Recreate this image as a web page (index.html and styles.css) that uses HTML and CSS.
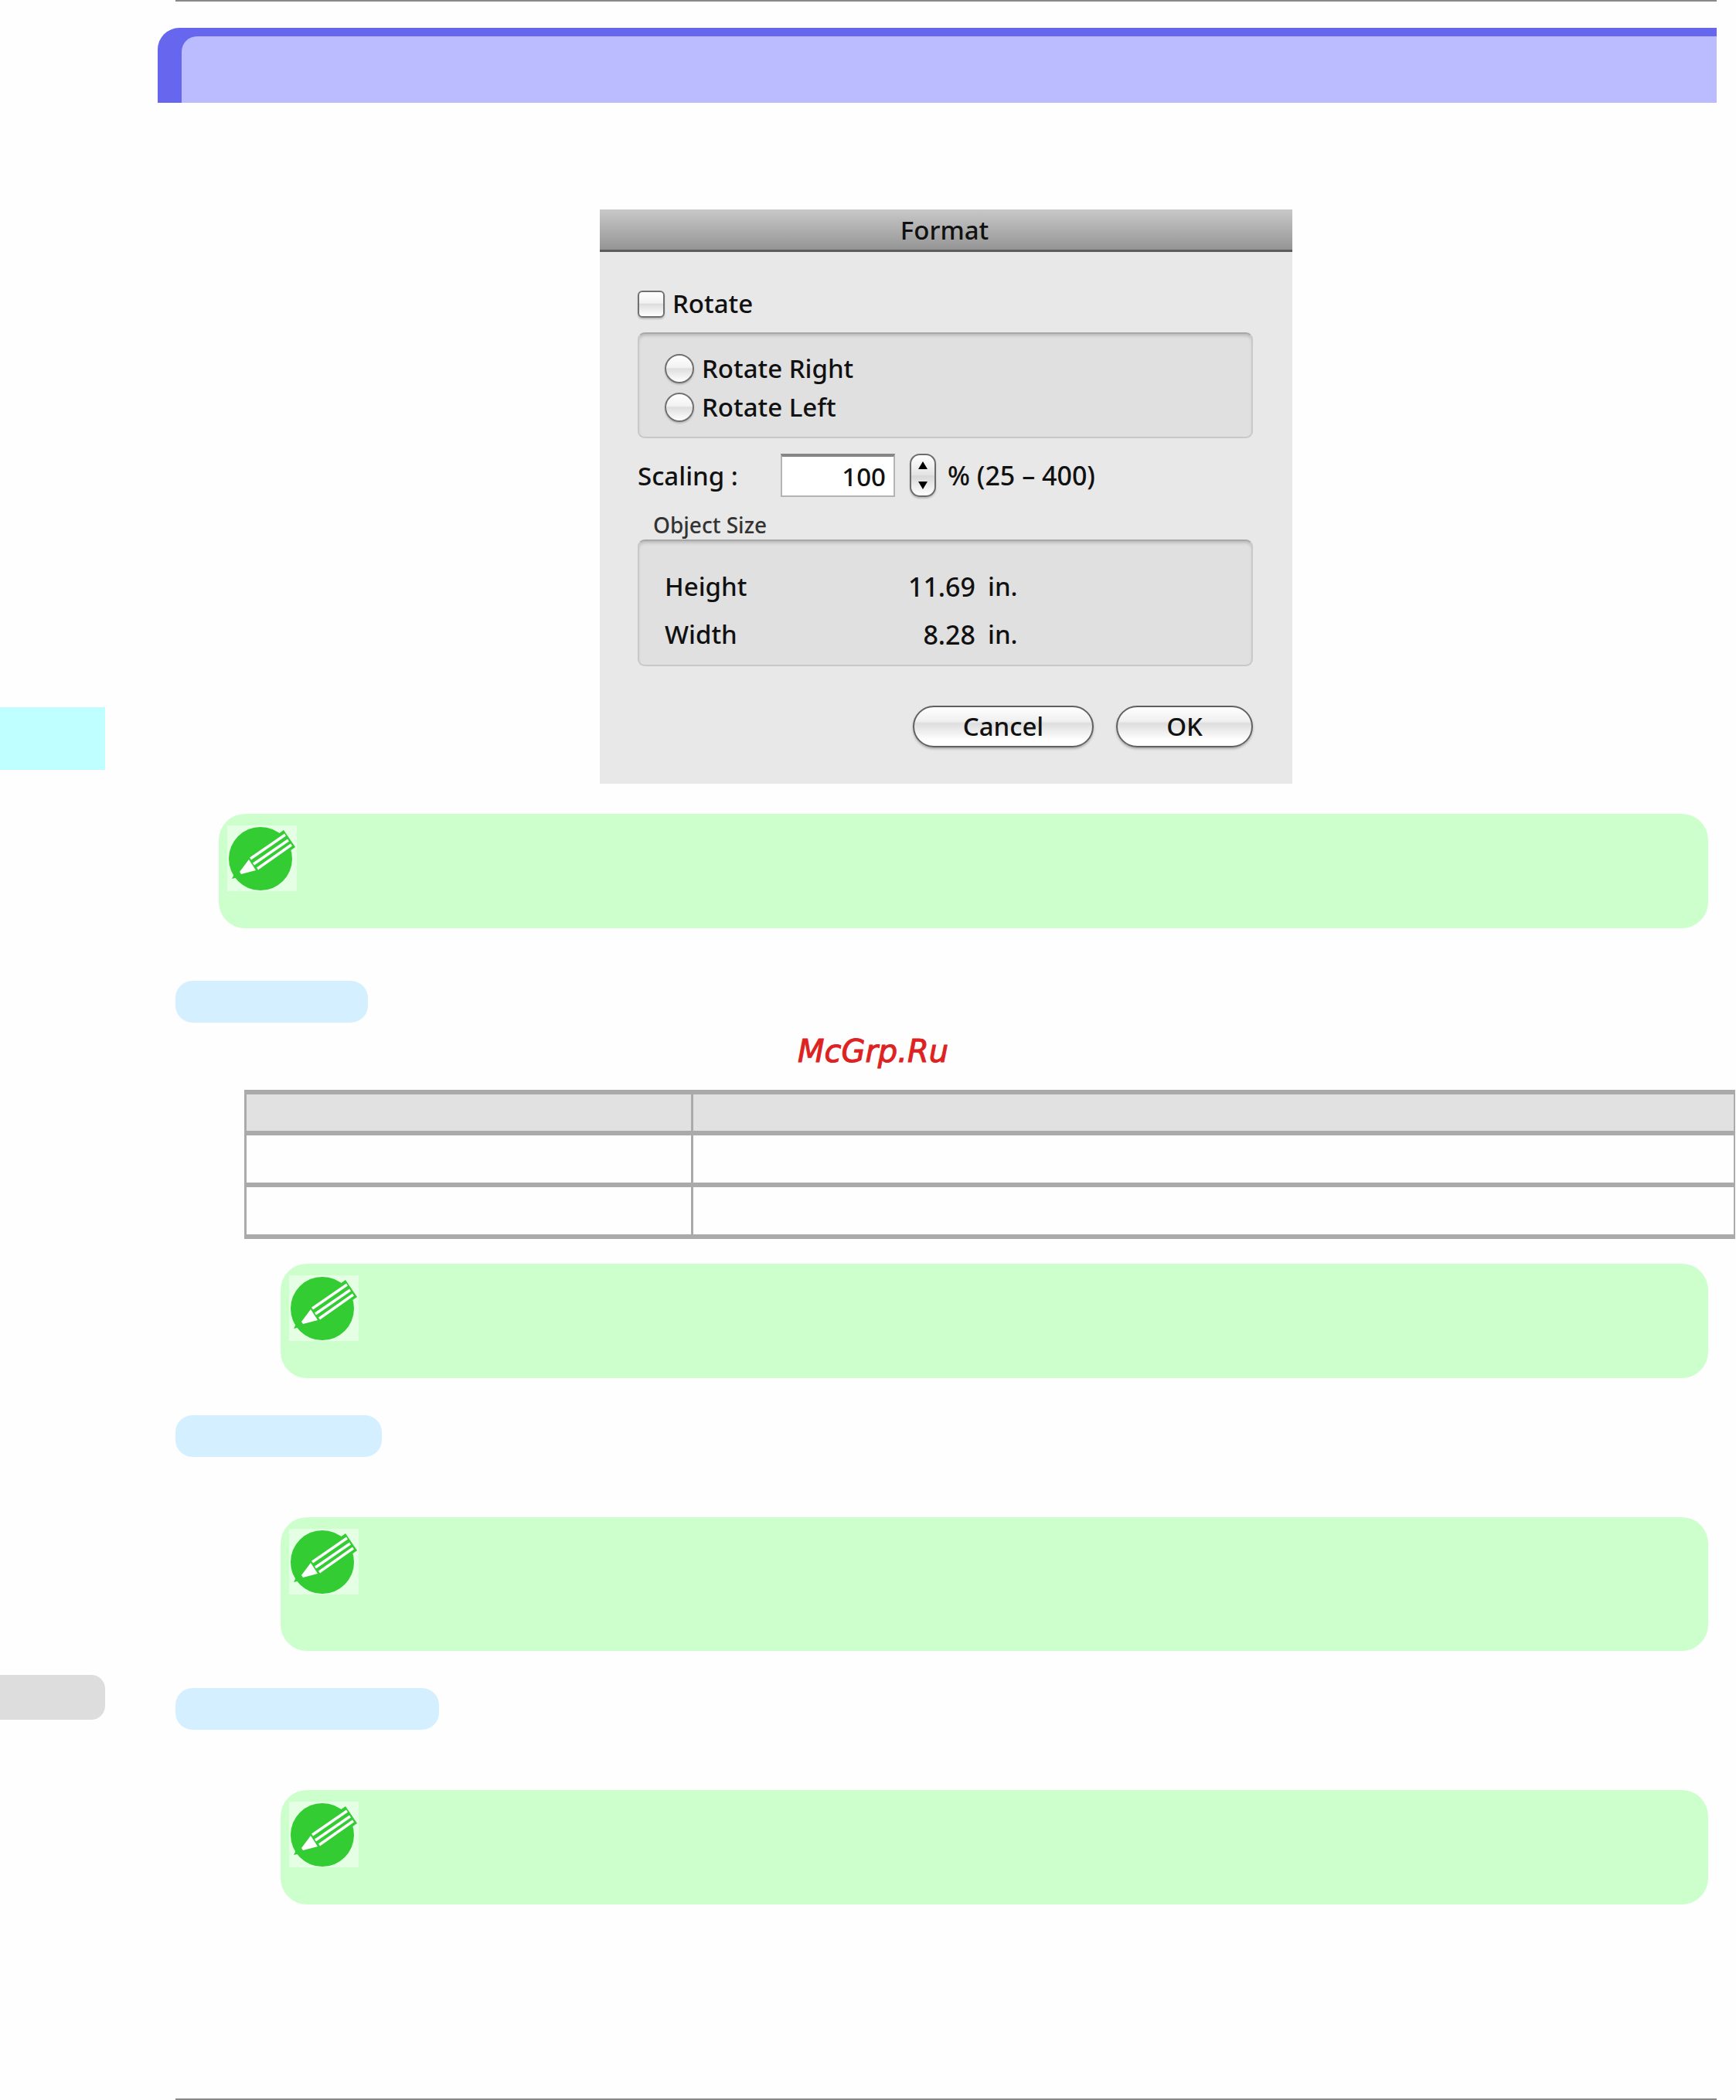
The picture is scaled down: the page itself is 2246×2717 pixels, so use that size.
FILE: index.html
```html
<!DOCTYPE html>
<html lang="en">
<head>
<meta charset="utf-8">
<title>Format</title>
<link rel="stylesheet" href="styles.css">
</head>
<body>
<svg class="defs" aria-hidden="true">
  <symbol id="pencil" viewBox="0 0 90 85">
    <rect width="90" height="85" fill="#e4ffe4"/>
    <circle cx="43" cy="43" r="41" fill="#33cc33"/>
    <path d="M66 11 L73 6 L88 28 L81 33 L40 61 L14 67 L6 69 L10 61 L26 38 Z" fill="#33cc33"/>
    <path d="M30 43 L75 12 M34 50 L79 19 M39 56 L83 25" stroke="#fff" stroke-width="3.4" fill="none"/>
    <path d="M28 44 L37 58 L18 63 L16 60 Z" fill="#fff"/>
  </symbol>
</svg>
<div class="page">
  <aside class="side">
    <div class="side-tab"></div>
    <div class="side-page"></div>
  </aside>
  <main class="main">
    <div class="rule"></div>
    <header class="banner"><div class="banner-inner"></div></header>

    <form class="dialog">
      <div class="titlebar">Format</div>
      <div class="body">
        <div class="option"><input class="check" type="checkbox" id="rotate"><label for="rotate">Rotate</label></div>
        <div class="group directions">
          <div class="option"><input class="radio" type="radio" name="dir" id="right"><label for="right">Rotate Right</label></div>
          <div class="option"><input class="radio" type="radio" name="dir" id="left"><label for="left">Rotate Left</label></div>
        </div>
        <div class="scaling">
          <label class="scaling-label" for="scale">Scaling :</label>
          <input class="scale" type="text" id="scale" value="100">
          <div class="stepper">
            <button type="button" class="step" aria-label="Increase"><svg width="14" height="12" viewBox="0 0 14 12"><path d="M7 1 L13 11 H1 Z"/></svg></button>
            <button type="button" class="step" aria-label="Decrease"><svg width="14" height="12" viewBox="0 0 14 12"><path d="M7 11 L13 1 H1 Z"/></svg></button>
          </div>
          <span class="range">% (25 – 400)</span>
        </div>
        <div class="caption">Object Size</div>
        <div class="group sizes">
          <span>Height</span><span class="value">11.69</span><span>in.</span>
          <span>Width</span><span class="value">8.28</span><span>in.</span>
        </div>
        <div class="actions">
          <button type="button" class="btn cancel">Cancel</button>
          <button type="button" class="btn ok">OK</button>
        </div>
      </div>
    </form>

    <div class="note first"><svg class="icon"><use href="#pencil"/></svg></div>

    <div class="pill pill-s"></div>
    <p class="watermark">McGrp.Ru</p>
    <table class="table">
      <thead><tr><th></th><th></th></tr></thead>
      <tbody>
        <tr><td></td><td></td></tr>
        <tr><td></td><td></td></tr>
      </tbody>
    </table>
    <div class="note after-table"><svg class="icon"><use href="#pencil"/></svg></div>

    <div class="pill pill-m"></div>
    <div class="note tall"><svg class="icon"><use href="#pencil"/></svg></div>

    <div class="pill pill-l"></div>
    <div class="note"><svg class="icon"><use href="#pencil"/></svg></div>

    <div class="rule end"></div>
  </main>
</div>
</body>
</html>
```

FILE: styles.css
```css
* { box-sizing: border-box; }

body {
  margin: 0;
  background: #fefefe;
  color: #111;
  font-family: "Noto Sans", "Open Sans", sans-serif;
  font-size: 33px;
  font-weight: 500;
}

.defs { display: none; }

.page {
  display: grid;
  grid-template-columns: 136px minmax(0, 1fr);
  min-height: 100vh;
}

/* left margin tabs */
.side-tab { margin-top: 915px; height: 81px; background: #c0ffff; }
.side-page {
  margin-top: 1171px;
  height: 58px;
  background: #ddd;
  border-radius: 0 18px 18px 0;
}

.main { display: flex; flex-direction: column; padding-left: 91px; }

.rule { height: 2px; margin-right: 25px; background: #888; }
.end { margin-top: auto; }

.banner {
  margin: 34px 25px 0 -23px;
  padding: 11px 0 0 31px;
  background: #66e;
  border-radius: 28px 0 0 0;
}
.banner-inner { height: 86px; background: #bbf; border-radius: 20px 0 0 0; }

/* dialog */
.dialog {
  align-self: center;
  width: 896px;
  margin: 138px 25px 0 0;
  background: #e8e8e8;
}
.titlebar {
  height: 55px;
  padding-right: 4px;
  line-height: 54px;
  text-align: center;
  background: linear-gradient(#c8c8c8, #959595);
  border-bottom: 3px solid #5c5c5c;
}
.body { padding: 49px 51px 47px 49px; }

.option { display: flex; align-items: center; gap: 10px; line-height: 36px; }
.check, .radio {
  appearance: none;
  margin: 0;
  border: 2px solid #707070;
  background: linear-gradient(#fff, #f2f2f2 45%, #dedede 50%, #fff);
  box-shadow: 0 2px 2px #bbb;
}
.check { width: 35px; height: 35px; border-radius: 6px; }
.radio { width: 38px; height: 38px; border-radius: 50%; }

.group {
  background: #e0e0e0;
  border: 2px solid #c8c8c8;
  border-top-color: #a8a8a8;
  border-radius: 9px;
  box-shadow: inset 0 4px 4px -2px #b4b4b4;
}
.directions { margin-top: 19px; height: 137px; padding: 20px 33px; }
.directions .option { height: 50px; }

.scaling { display: flex; align-items: center; margin-top: 20px; height: 56px; }
.scaling-label { width: 185px; }
.scale {
  width: 148px;
  height: 56px;
  padding: 0 10px;
  border: 2px solid #b4b4b4;
  border-top: 4px solid #858585;
  background: #fff;
  font: inherit;
  color: inherit;
  text-align: right;
}
.stepper {
  display: flex;
  flex-direction: column;
  width: 34px;
  height: 56px;
  margin: 0 15px 0 19px;
  border: 2px solid #6c6c6c;
  border-radius: 13px;
  background: linear-gradient(#fff, #e4e4e4 48%, #d8d8d8 52%, #fff);
  box-shadow: 0 2px 2px #bbb;
}
.step {
  flex: 1;
  display: flex;
  align-items: center;
  justify-content: center;
  padding: 0;
  border: 0;
  background: none;
}
.range, .value { font-size: 34px; }

.caption {
  margin: 18px 0 1px 20px;
  font-size: 28px;
  line-height: 36px;
  color: #333;
}
.sizes {
  display: grid;
  grid-template-columns: 200px 202px 1fr;
  height: 164px;
  padding: 28px 33px 8px;
  line-height: 62px;
}
.value { text-align: right; }
.value + span { padding-left: 16px; }

.actions { display: flex; justify-content: flex-end; gap: 29px; margin-top: 51px; }
.btn {
  height: 54px;
  padding: 0;
  border: 2px solid #606060;
  border-radius: 27px;
  background: linear-gradient(#fff, #f0f0f0 36%, #dedede 42%, #fff 85%);
  box-shadow: 0 2px 3px #aaa;
  font: inherit;
  line-height: 48px;
  color: inherit;
}
.cancel { width: 234px; }
.ok { width: 177px; }

/* notes */
.note {
  min-height: 148px;
  margin: 78px 36px 0 136px;
  padding: 15px 11px;
  background: #cfc;
  border-radius: 34px;
}
.first { margin: 39px 36px 0 56px; }
.after-table { margin-top: 32px; }
.tall { min-height: 173px; }
.icon { display: block; width: 90px; height: 85px; }

/* section labels */
.pill { height: 54px; margin-top: 48px; background: #d4efff; border-radius: 22px; }
.pill-s { width: 249px; margin-top: 68px; }
.pill-m { width: 267px; }
.pill-l { width: 341px; }

.watermark {
  margin: 7px 214px 20px 0;
  text-align: center;
  font: italic 40px/60px "DejaVu Sans", sans-serif;
  color: #d22;
  -webkit-text-stroke: 1px #d22;
}

.table {
  margin: 0 1px 0 89px;
  border-collapse: separate;
  border-spacing: 0;
  table-layout: fixed;
  border-top: 6px solid #aaa;
  border-left: 3px solid #aaa;
}
.table th, .table td {
  height: 67px;
  padding: 0;
  border-bottom: 6px solid #aaa;
  border-right: 2px solid #aaa;
}
.table th { height: 53px; background: #e1e1e1; }
.table th:first-child, .table td:first-child { width: 30%; border-right-width: 3px; }
```
